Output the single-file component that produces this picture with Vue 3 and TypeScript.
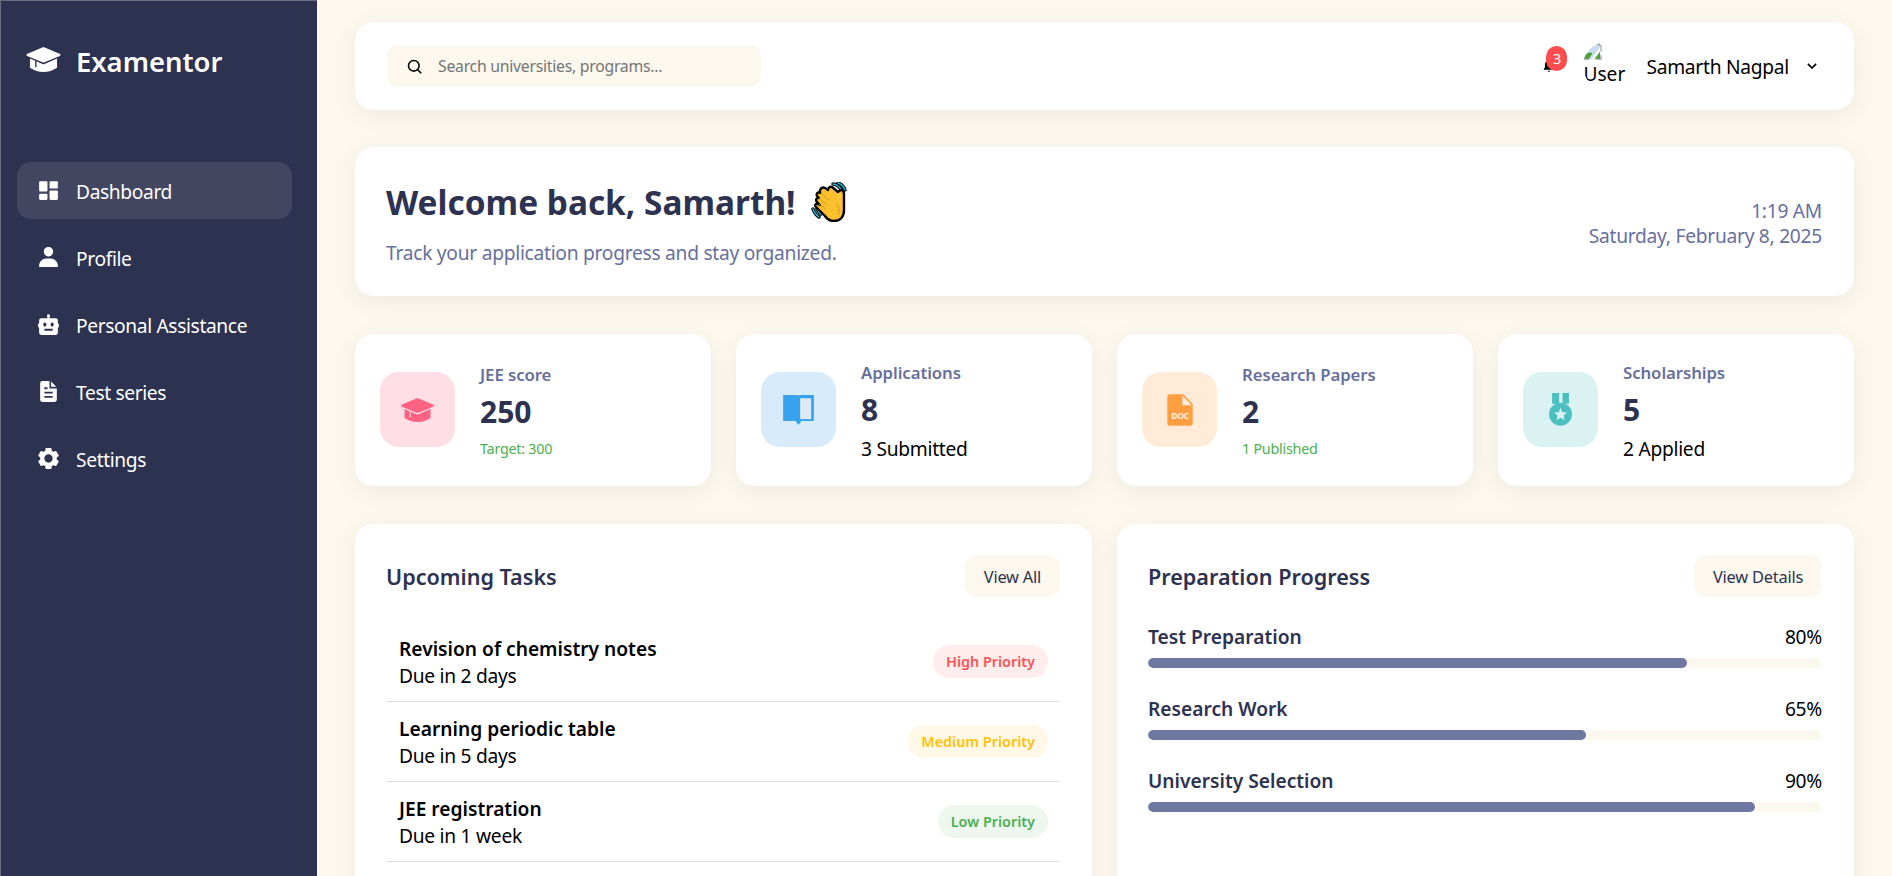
<script setup lang="ts">
interface NavItem {
  label: string
  icon: string
  active?: boolean
}

const nav: NavItem[] = [
  { label: 'Dashboard', active: true, icon: 'M4 13h6a1 1 0 0 0 1-1V4a1 1 0 0 0-1-1H4a1 1 0 0 0-1 1v8a1 1 0 0 0 1 1zm-1 7a1 1 0 0 0 1 1h6a1 1 0 0 0 1-1v-4a1 1 0 0 0-1-1H4a1 1 0 0 0-1 1v4zm10 0a1 1 0 0 0 1 1h6a1 1 0 0 0 1-1v-7a1 1 0 0 0-1-1h-6a1 1 0 0 0-1 1v7zm1-10h6a1 1 0 0 0 1-1V4a1 1 0 0 0-1-1h-6a1 1 0 0 0-1 1v5a1 1 0 0 0 1 1z' },
  { label: 'Profile', icon: 'M7.5 6.5C7.5 8.981 9.519 11 12 11s4.5-2.019 4.5-4.5S14.481 2 12 2 7.5 4.019 7.5 6.5zM20 21h1v-1c0-3.859-3.141-7-7-7h-4c-3.86 0-7 3.141-7 7v1h17z' },
  { label: 'Personal Assistance', icon: 'M21 10.975V8a2 2 0 0 0-2-2h-6V4.688c.305-.274.5-.668.5-1.11a1.5 1.5 0 0 0-3 0c0 .442.195.836.5 1.11V6H5a2 2 0 0 0-2 2v2.998l-.072.005A.999.999 0 0 0 2 12v2a1 1 0 0 0 1 1v5a2 2 0 0 0 2 2h14a2 2 0 0 0 2-2v-5a1 1 0 0 0 1-1v-1.938a1.004 1.004 0 0 0-.072-.455c-.202-.488-.635-.605-.928-.632zM7 12c0-1.104.672-2 1.5-2s1.5.896 1.5 2-.672 2-1.5 2S7 13.104 7 12zm8.998 6c-1.001-.003-7.997 0-7.997 0v-2s7.001-.002 8.002 0l-.005 2zm-.498-4c-.828 0-1.5-.896-1.5-2s.672-2 1.5-2 1.5.896 1.5 2-.672 2-1.5 2z' },
  { label: 'Test series', icon: 'M6 22h12a2 2 0 0 0 2-2V9h-7V2H6a2 2 0 0 0-2 2v16a2 2 0 0 0 2 2zm2-14h3v1.8H8V8zm0 4.2h8V14H8v-1.8zm0 4h8V18H8v-1.8zM14.5 2.5V7.500h5z' },
  { label: 'Settings', icon: 'm2.344 15.271 2 3.46a1 1 0 0 0 1.366.365l1.396-.806c.58.457 1.221.832 1.895 1.112V21a1 1 0 0 0 1 1h4a1 1 0 0 0 1-1v-1.598a8.094 8.094 0 0 0 1.895-1.112l1.396.806c.477.275 1.091.11 1.366-.365l2-3.46a1.004 1.004 0 0 0-.365-1.366l-1.372-.793a7.683 7.683 0 0 0-.002-2.224l1.372-.793c.476-.275.641-.89.365-1.366l-2-3.46a1 1 0 0 0-1.366-.365l-1.396.806A8.034 8.034 0 0 0 15 4.598V3a1 1 0 0 0-1-1h-4a1 1 0 0 0-1 1v1.598A8.094 8.094 0 0 0 7.105 5.71L5.71 4.904a.999.999 0 0 0-1.366.365l-2 3.46a1.004 1.004 0 0 0 .365 1.366l1.372.793a7.683 7.683 0 0 0 0 2.224l-1.372.793c-.476.275-.641.89-.365 1.366zM12 8c2.206 0 4 1.794 4 4s-1.794 4-4 4-4-1.794-4-4 1.794-4 4-4z' }
]

// same cap shape for the logo and the JEE card, the notch is drawn on top
const capTop = 'M49 0 97 20Q100 23 96 26L52 44Q49 45 46 44L2 26Q-1 23 1 20z'
const capBody = 'M10 33 46 49Q49 50 52 49L88 33V60Q70 72 49 72Q28 72 10 60z'

const stats = [
  { label: 'JEE score', value: '250', note: 'Target: 300', kind: 'small', tone: 'pink' },
  { label: 'Applications', value: '8', note: '3 Submitted', kind: 'plain', tone: 'blue' },
  { label: 'Research Papers', value: '2', note: '1 Published', kind: 'small', tone: 'orange' },
  { label: 'Scholarships', value: '5', note: '2 Applied', kind: 'plain', tone: 'teal' }
]

const tasks = [
  { title: 'Revision of chemistry notes', due: 'Due in 2 days', priority: 'High Priority', level: 'high' },
  { title: 'Learning periodic table', due: 'Due in 5 days', priority: 'Medium Priority', level: 'medium' },
  { title: 'JEE registration', due: 'Due in 1 week', priority: 'Low Priority', level: 'low' }
]

const progress = [
  { label: 'Test Preparation', value: 80 },
  { label: 'Research Work', value: 65 },
  { label: 'University Selection', value: 90 }
]
</script>

<template>
  <div class="layout">
    <aside class="sidebar">
      <div class="brand">
        <svg class="brand-icon" viewBox="0 0 98 72">
          <path :d="capTop" fill="#fff" />
          <path :d="capBody" fill="#fff" />
          <path d="M27 38v20" stroke="#2d3250" stroke-width="4" />
        </svg>
        <span>Examentor</span>
      </div>
      <nav class="nav">
        <a v-for="item in nav" :key="item.label" class="nav-item" :class="{ active: item.active }">
          <svg viewBox="0 0 24 24"><path :d="item.icon" fill-rule="evenodd" /></svg>
          <span>{{ item.label }}</span>
        </a>
      </nav>
    </aside>

    <main class="main">
      <header class="card topbar">
        <div class="search">
          <svg viewBox="0 0 24 24" fill="none" stroke="#000" stroke-width="2.200"><circle cx="11" cy="11" r="7.500" /><path d="m16.500 16.500 5 5" /></svg>
          <span>Search universities, programs...</span>
        </div>
        <div class="user">
          <div class="bell">
            <svg viewBox="0 0 24 24"><path d="M12 22a2.500 2.500 0 0 0 2.400-2h-4.800a2.500 2.500 0 0 0 2.400 2zM19 14.600V10a7 7 0 0 0-5.500-6.800V2h-3v1.200A7 7 0 0 0 5 10v4.600L3 17v1.500h18V17z" /></svg>
            <b class="count">3</b>
          </div>
          <div class="avatar">
            <svg class="broken" viewBox="0 0 20 20">
              <path d="M1 13 7 4h6l2-3h3v4l-9 13H1z" fill="#c9d9ee" />
              <path d="M1 18v-3c3-4 7-5 9-3l-4 6z" fill="#4aa337" />
              <path d="M12 18l6-8v8z" fill="#4aa337" />
              <path d="M13 2h3.500L19 4.500V10M19 14v4h-5M7 18H1v-4" fill="none" stroke="#9a9a9a" stroke-width="1.200" />
            </svg>
            <span>User</span>
          </div>
          <span class="name">Samarth Nagpal</span>
          <svg class="chevron" viewBox="0 0 24 24" fill="none" stroke="#000" stroke-width="3"><path d="m5 8.500 7 7 7-7" /></svg>
        </div>
      </header>

      <section class="card welcome">
        <div class="greeting">
          <h1>
            Welcome back, Samarth!
            <svg class="wave" viewBox="0 0 36 40">
              <path d="M22 2c4 0 8 4 9 8M27 1c3 1 6 4 7 7M2 27c1 3 3 6 6 8M6 27c1 2 2 4 4 5" fill="none" stroke="#000" stroke-width="3.400" stroke-linecap="round" />
              <path d="M22 2c4 0 8 4 9 8M27 1c3 1 6 4 7 7M2 27c1 3 3 6 6 8M6 27c1 2 2 4 4 5" fill="none" stroke="#29b6d8" stroke-width="1.400" stroke-linecap="round" />
              <path d="M9 8c1-2 3-3 5-2l3 2c0-2 2-4 4-3l6 5c1-1 2-2 3-2 2 0 3 2 3 4l0 16c0 7-4 11-10 11-4 0-7-2-9-5l-9-9c-2-2 0-4 2-3l2 1-3-3c-2-2 0-5 2-4l-2-2c-1-2 1-5 3-3z" fill="#fbc02d" stroke="#000" stroke-width="2.400" stroke-linejoin="round" />
              <path d="M10 11l8 7M8 16l8 7M8 22l7 5M25 21c3 3 4 7 2 12" fill="none" stroke="#d9961a" stroke-width="1" />
            </svg>
          </h1>
          <p>Track your application progress and stay organized.</p>
        </div>
        <div class="clock">
          <div>1:19 AM</div>
          <div>Saturday, February 8, 2025</div>
        </div>
      </section>

      <section class="stats">
        <div v-for="stat in stats" :key="stat.label" class="card stat">
          <div class="stat-icon" :class="stat.tone">
            <svg v-if="stat.tone === 'pink'" class="ic-cap" viewBox="0 0 98 72">
              <path :d="capTop" />
              <path :d="capBody" />
              <path d="M27 38v20" stroke="#ffdee5" stroke-width="3" />
            </svg>
            <svg v-else-if="stat.tone === 'blue'" class="ic-book" viewBox="0 0 94 92">
              <path d="M0 0H94V80H56L47 92 38 80H0z" />
              <path d="M52 10H86V74H52z" fill="#dbe9f8" />
              <path d="M45 0h3v3h-3z" fill="#d7ebfb" />
            </svg>
            <svg v-else-if="stat.tone === 'orange'" class="ic-doc" viewBox="0 0 24 24">
              <path d="M6 2h8l6 6v12.500a1.500 1.500 0 0 1-1.500 1.500h-13A1.500 1.500 0 0 1 4 20.500v-17A1.500 1.500 0 0 1 5.500 2z" />
              <path d="M13.500 3v6h6z" fill="#ffebd9" />
              <text x="12" y="17.500" text-anchor="middle" class="doc">DOC</text>
            </svg>
            <svg v-else class="ic-medal" viewBox="0 0 68 98">
              <path d="M9 0H30V32H9zM40 0H59V32H40z" />
              <circle cx="34" cy="63" r="34" />
              <path d="m34 44 5.500 13 14 1-10.500 9 3.500 14L34 73.500 22 81l3.500-14L15 58l14-1z" fill="#dbf2f2" />
            </svg>
          </div>
          <div class="stat-body">
            <div class="stat-label">{{ stat.label }}</div>
            <div class="stat-value">{{ stat.value }}</div>
            <div :class="stat.kind === 'small' ? 'note-small' : 'note-plain'">{{ stat.note }}</div>
          </div>
        </div>
      </section>

      <section class="panels">
        <div class="card panel">
          <div class="panel-head">
            <h2>Upcoming Tasks</h2>
            <button class="ghost">View All</button>
          </div>
          <div class="tasks">
            <div v-for="task in tasks" :key="task.title" class="task">
              <div>
                <div class="task-title">{{ task.title }}</div>
                <div class="task-due">{{ task.due }}</div>
              </div>
              <span class="badge" :class="task.level">{{ task.priority }}</span>
            </div>
          </div>
        </div>

        <div class="card panel">
          <div class="panel-head">
            <h2>Preparation Progress</h2>
            <button class="ghost">View Details</button>
          </div>
          <div class="bars">
            <div v-for="row in progress" :key="row.label" class="bar-row">
              <div class="bar-text">
                <span class="bar-label">{{ row.label }}</span>
                <span class="bar-value">{{ row.value }}%</span>
              </div>
              <div class="track"><div class="fill" :style="{ width: row.value + '%' }"></div></div>
            </div>
          </div>
        </div>
      </section>
    </main>
  </div>
</template>

<style>
html, body {
  margin: 0;
  height: 100%;
  overflow: hidden;
}
</style>

<style scoped>
* {
  box-sizing: border-box;
}

.layout {
  display: flex;
  height: 876px;
  overflow: hidden;
  background: #fcf8ee;
  color: #000;
  font-family: "Noto Sans", "Open Sans", sans-serif;
  font-size: 19.2px;
  letter-spacing: -0.014em;
}

.sidebar {
  width: 317px;
  flex-shrink: 0;
  background: #2d3250;
  color: #fff;
  padding: 0 25px 0 17px;
  box-shadow: inset 1px 1px 0 rgba(255, 255, 255, 0.3);
}

.brand {
  display: flex;
  align-items: center;
  gap: 15px;
  height: 122px;
  padding-left: 9px;
  margin-bottom: 40px;
  font-size: 27.4px;
  font-weight: 600;
  letter-spacing: 0;
}
.brand-icon {
  width: 35px;
  height: 25px;
  margin-top: -3px;
}

.nav {
  display: flex;
  flex-direction: column;
  gap: 10px;
}
.nav-item {
  display: flex;
  align-items: center;
  gap: 15px;
  height: 57px;
  padding: 0 19px;
  border-radius: 14px;
  letter-spacing: -0.019em;
}
.nav-item span {
  padding-top: 2px;
}
.nav-item svg {
  width: 25px;
  height: 25px;
  fill: #fff;
}
.nav-item.active {
  background: rgba(255, 255, 255, 0.1);
}

.main {
  flex: 1;
  min-width: 0;
  padding: 22px 38px 0;
  display: flex;
  flex-direction: column;
  gap: 37px;
}

.card {
  background: #fff;
  border-radius: 19px;
  box-shadow: 0 5px 24px rgba(0, 0, 0, 0.06);
}

.topbar {
  height: 88px;
  flex-shrink: 0;
  padding: 0 35px 0 31px;
  display: flex;
  align-items: center;
  justify-content: space-between;
}
.search {
  width: 375px;
  height: 42px;
  background: #fcf8ee;
  border-radius: 12px;
  display: flex;
  align-items: center;
  gap: 15px;
  padding: 0 20px;
  font-size: 15.8px;
  color: #757575;
}
.search svg {
  width: 17px;
  height: 17px;
}

.user {
  display: flex;
  align-items: center;
}
.bell {
  position: relative;
  width: 14px;
  height: 14px;
  margin-right: 27px;
}
.bell svg {
  width: 14px;
  height: 14px;
  display: block;
}
.count {
  position: absolute;
  left: 4px;
  top: -13px;
  width: 21px;
  height: 25px;
  border-radius: 11px;
  background: #ff4d4f;
  color: #fff;
  font-size: 14.4px;
  font-weight: 400;
  display: flex;
  align-items: center;
  justify-content: center;
}
.avatar {
  width: 48px;
  height: 48px;
  border-radius: 50%;
  overflow: hidden;
  margin-right: 15px;
  line-height: 26px;
  letter-spacing: 0;
}
.avatar span {
  display: block;
}
.broken {
  width: 19px;
  height: 19px;
  display: block;
}
.name {
  margin-right: 16px;
}
.chevron {
  width: 14px;
  height: 14px;
}

.welcome {
  height: 149px;
  flex-shrink: 0;
  padding: 0 32px 0 31px;
  display: flex;
  align-items: center;
  justify-content: space-between;
  margin-bottom: 1px;
}
.greeting {
  padding-top: 2.6px;
}
h1 {
  margin: 0 0 14.4px;
  font-size: 33.4px;
  font-weight: 700;
  color: #2d3250;
  line-height: 46px;
  letter-spacing: 0;
  display: flex;
  align-items: center;
  gap: 14px;
}
.wave {
  width: 38px;
  height: 40px;
}
.welcome p {
  margin: 0;
  color: #676f9d;
}
.clock {
  text-align: right;
  color: #676f9d;
  line-height: 25.5px;
  padding-top: 3px;
}

.stats {
  display: grid;
  grid-template-columns: repeat(4, 1fr);
  gap: 25px;
  flex-shrink: 0;
  margin-bottom: 1px;
}
.stat {
  height: 152px;
  padding: 0 25px;
  display: flex;
  align-items: center;
  gap: 25px;
}
.stat-icon {
  width: 75px;
  height: 75px;
  margin-top: -1px;
  border-radius: 19px;
  display: flex;
  align-items: center;
  justify-content: center;
}
.stat-icon svg {
  fill: currentColor;
}
.ic-cap {
  width: 33px;
  height: 24px;
}
.ic-book {
  width: 31px;
  height: 30px;
}
.ic-doc {
  width: 38px;
  height: 38px;
}
.ic-medal {
  width: 23px;
  height: 33px;
}
.pink { background: #ffdee5; color: #ff6384; }
.blue { background: #d7ebfb; color: #36a2eb; }
.orange { background: #ffebd8; color: #ff9f40; }
.teal { background: #dbf2f2; color: #4bc0c0; }
.doc {
  font-size: 5.500px;
  font-weight: 700;
  fill: #ffebd9;
}
.stat-body {
  padding-top: 2px;
}
.stat-label {
  font-size: 16.800px;
  font-weight: 600;
  color: #676f9d;
  line-height: 23px;
  letter-spacing: -0.005em;
}
.stat-value {
  font-size: 30px;
  font-weight: 700;
  color: #2d3250;
  line-height: 44px;
  margin: 4px 0;
  letter-spacing: 0;
}
.note-small {
  font-size: 14.400px;
  color: #4caf50;
  line-height: 20px;
  margin-top: 5px;
}
.note-plain {
  line-height: 26px;
}

.panels {
  display: grid;
  grid-template-columns: 1fr 1fr;
  gap: 25px;
  flex: 1;
}
.panel {
  height: 520px;
  padding: 31px 32px 31px 31px;
}
.panel-head {
  display: flex;
  align-items: center;
  justify-content: space-between;
  height: 42px;
  margin-bottom: 25px;
}
h2 {
  margin: 0;
  font-size: 21.600px;
  font-weight: 600;
  color: #2d3250;
  letter-spacing: 0;
}
.ghost {
  height: 42px;
  padding: 0 19px;
  border: none;
  border-radius: 12px;
  background: #fcf8ee;
  color: #2d3250;
  font: inherit;
  font-size: 16.4px;
  letter-spacing: -0.014em;
}

.task {
  height: 80px;
  padding: 0 12px 0 13px;
  border-bottom: 1px solid #e0e0e0;
  display: flex;
  align-items: center;
  justify-content: space-between;
}
.task-title {
  font-weight: 600;
  letter-spacing: 0;
}
.badge {
  height: 33px;
  padding: 0 13px;
  border-radius: 17px;
  font-size: 14.400px;
  font-weight: 600;
  letter-spacing: 0;
  display: flex;
  align-items: center;
}
.high { background: #ffeded; color: #ff5252; }
.medium { background: #fff8e6; color: #ffc107; }
.low { background: #edf7ee; color: #4caf50; }

.bars {
  display: flex;
  flex-direction: column;
  gap: 26px;
}
.bar-text {
  display: flex;
  justify-content: space-between;
  line-height: 26px;
  padding-top: 2px;
  margin-bottom: 8px;
}
.bar-label {
  font-weight: 600;
  color: #2d3250;
  letter-spacing: 0;
}
.track {
  height: 10px;
  border-radius: 5px;
  background: #fcf8ee;
  overflow: hidden;
}
.fill {
  height: 100%;
  border-radius: 5px;
  background: #7077a1;
}
</style>
